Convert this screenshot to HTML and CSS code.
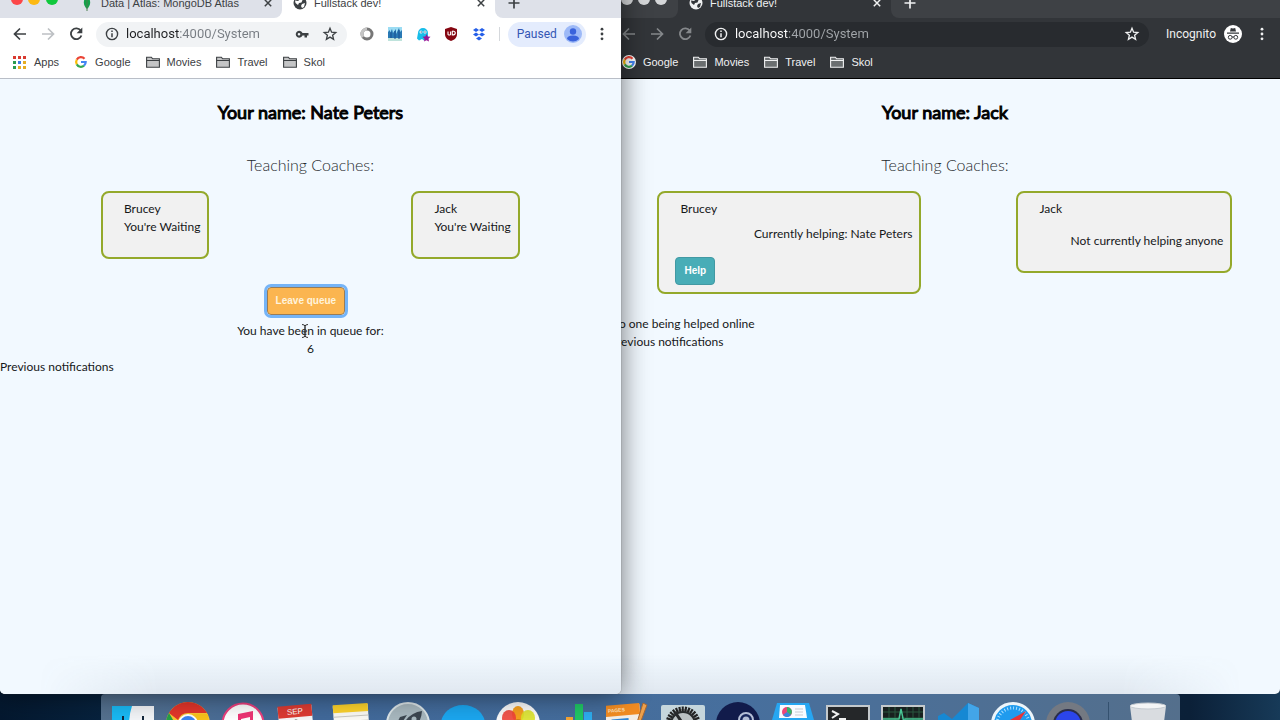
FILE: index.html
```html
<!DOCTYPE html>
<html lang="en">
<head>
<meta charset="utf-8">
<title>Fullstack dev!</title>
<link rel="stylesheet" href="styles.css">
</head>
<body>
<svg class="sprite" aria-hidden="true">
  <symbol id="back" viewBox="0 0 16 16"><path d="M14 8H3M8 2.500L2.500 8L8 13.500" fill="none" stroke="currentColor" stroke-width="1.700"/></symbol>
  <symbol id="forward" viewBox="0 0 16 16"><path d="M2 8h11M8 2.500L13.500 8L8 13.500" fill="none" stroke="currentColor" stroke-width="1.700"/></symbol>
  <symbol id="reload" viewBox="0 0 16 16"><path d="M12.700 4.600A5.400 5.400 0 1 0 13.400 9.500" fill="none" stroke="currentColor" stroke-width="1.800"/><path d="M14.300 1.500v5.700H8.600z" fill="currentColor"/></symbol>
  <symbol id="info" viewBox="0 0 16 16"><circle cx="8" cy="8" r="5.600" fill="none" stroke="currentColor" stroke-width="1.400"/><path d="M8 7.200V11.200M8 4.600v1.500" stroke="currentColor" stroke-width="1.500"/></symbol>
  <symbol id="star" viewBox="0 0 16 16"><path d="M8 2.300L9.600 6.200L13.800 6.500L10.600 9.200L11.600 13.300L8 11.100L4.400 13.300L5.400 9.200L2.200 6.500L6.400 6.200Z" fill="none" stroke="currentColor" stroke-width="1.300"/></symbol>
  <symbol id="dots" viewBox="0 0 16 16"><circle cx="8" cy="3.200" r="1.400"/><circle cx="8" cy="8" r="1.400"/><circle cx="8" cy="12.800" r="1.400"/></symbol>
  <symbol id="close" viewBox="0 0 16 16"><path d="M4.800 4.800l6.400 6.400M11.200 4.800l-6.400 6.400" stroke="currentColor" stroke-width="1.500"/></symbol>
  <symbol id="plus" viewBox="0 0 16 16"><path d="M8 2.500v11M2.500 8h11" stroke="currentColor" stroke-width="1.700"/></symbol>
  <symbol id="folder" viewBox="0 0 14 14"><path d="M.600 12.200V2.200h4.800l1.200 1.600h6.800v8.400z" fill="currentColor" fill-opacity=".3" stroke="currentColor" stroke-width="1.100"/><path d="M.600 5.500h12.800" stroke="currentColor"/></symbol>
  <symbol id="google" viewBox="0 0 14 14"><g fill="none" stroke-width="2.200"><path d="M2.800 4.600A4.700 4.700 0 0 1 10.500 3.800" stroke="#ea4335"/><path d="M2.800 4.600A4.900 4.900 0 0 0 2.800 9.400" stroke="#fbbc05"/><path d="M2.800 9.400A4.700 4.700 0 0 0 10 10.600" stroke="#34a853"/><path d="M10 10.600A4.700 4.700 0 0 0 11.700 7H7" stroke="#4285f4"/></g></symbol>
  <symbol id="globe" viewBox="0 0 16 16"><circle cx="8" cy="8" r="6.500" fill="currentColor"/><path class="land" d="M3 5.500l3 .5 2-1.500 2.500.5-1 2.500-2.500.5L6 10 3.500 8zM10 9l3-1-1 4-2 1-1-2z"/></symbol>
</svg>

<div class="desktop">
  <main class="workspace">

    <section class="window window-back">
      <div class="tabs">
        <div class="tabs-start"><svg class="lights" viewBox="0 0 60 16"><g fill="#d5d7d9"><circle cx="17" cy="4" r="6"/><circle cx="34" cy="4" r="6"/><circle cx="51" cy="4" r="6"/></g></svg></div>
        <div class="tab"><svg class="icon"><use href="#globe"/></svg><span class="tab-title">Fullstack dev!</span><button class="plain" aria-label="Close tab"><svg class="icon"><use href="#close"/></svg></button></div>
        <div class="tabs-end"><button class="plain" aria-label="New tab"><svg class="icon"><use href="#plus"/></svg></button></div>
      </div>
      <div class="toolbar">
        <button class="plain muted" aria-label="Back"><svg class="icon"><use href="#back"/></svg></button>
        <button class="plain muted" aria-label="Forward"><svg class="icon"><use href="#forward"/></svg></button>
        <button class="plain muted" aria-label="Reload"><svg class="icon"><use href="#reload"/></svg></button>
        <div class="address"><svg class="icon"><use href="#info"/></svg><input class="url" type="text" aria-label="Address" value="localhost:4000/System"><button class="plain" aria-label="Bookmark page"><svg class="icon"><use href="#star"/></svg></button></div>
        <div class="incognito"><span>Incognito</span>
          <svg class="badge" viewBox="0 0 18 18"><circle cx="9" cy="9" r="9" fill="#fff"/><path d="M6 6.500l.8-3.500 2.200.5 2.200-.5.8 3.500zM3 7.500h12v1.200H3z" fill="#35383c"/><g fill="none" stroke="#35383c"><circle cx="6.200" cy="12.300" r="1.900"/><circle cx="11.800" cy="12.300" r="1.900"/><path d="M8 12h2"/></g></svg></div>
        <button class="plain" aria-label="Menu"><svg class="icon" fill="currentColor"><use href="#dots"/></svg></button>
      </div>
      <nav class="bookmarks" aria-label="Bookmarks">
        <a href="#"><svg class="mark mark-disc"><use href="#google"/></svg>Google</a>
        <a href="#"><svg class="mark"><use href="#folder"/></svg>Movies</a>
        <a href="#"><svg class="mark"><use href="#folder"/></svg>Travel</a>
        <a href="#"><svg class="mark"><use href="#folder"/></svg>Skol</a>
      </nav>
      <article class="page">
        <h1>Your name: Jack</h1>
        <h2>Teaching Coaches:</h2>
        <div class="coaches">
          <div class="coach coach-helping">
            <p class="coach-name">Brucey</p>
            <p class="coach-status">Currently helping: Nate Peters</p>
            <button class="btn btn-help">Help</button>
          </div>
          <div class="coach coach-idle">
            <p class="coach-name">Jack</p>
            <p class="coach-status">Not currently helping anyone</p>
          </div>
        </div>
        <div class="notes">
          <p>No one being helped online</p>
          <p>Previous notifications</p>
        </div>
      </article>
    </section>

    <section class="window window-front">
      <div class="tabs">
        <div class="tabs-start">
          <svg class="lights" viewBox="0 0 60 16"><circle cx="17" cy="4" r="6" fill="#fc4648"/><circle cx="34" cy="4" r="6" fill="#fdb912"/><circle cx="52" cy="4" r="6" fill="#10c83c"/></svg>
          <svg class="icon leaf" viewBox="0 0 16 16"><path d="M8 0C12 5 12.500 10 8 14C3.500 10 4 5 8 0z" fill="#13a24a"/><path d="M8 3v13" stroke="#4b7f4f"/></svg>
          <span class="tab-title">Data | Atlas: MongoDB Atlas</span>
          <button class="plain" aria-label="Close tab"><svg class="icon"><use href="#close"/></svg></button>
        </div>
        <div class="tab"><svg class="icon"><use href="#globe"/></svg><span class="tab-title">Fullstack dev!</span><button class="plain" aria-label="Close tab"><svg class="icon"><use href="#close"/></svg></button></div>
        <div class="tabs-end"><button class="plain" aria-label="New tab"><svg class="icon"><use href="#plus"/></svg></button></div>
      </div>
      <div class="toolbar">
        <button class="plain" aria-label="Back"><svg class="icon"><use href="#back"/></svg></button>
        <button class="plain muted" aria-label="Forward"><svg class="icon"><use href="#forward"/></svg></button>
        <button class="plain" aria-label="Reload"><svg class="icon"><use href="#reload"/></svg></button>
        <div class="address"><svg class="icon"><use href="#info"/></svg><input class="url" type="text" aria-label="Address" value="localhost:4000/System">
          <button class="plain" aria-label="Passwords"><svg class="icon" viewBox="0 0 16 16"><path fill-rule="evenodd" d="M8.500 7H14.500v2.500H13v2h-2.500v-2h-2A3.500 3.500 0 1 1 8.500 7zM5 6.900a1.300 1.300 0 1 0 0 2.600a1.300 1.300 0 1 0 0-2.600z" fill="currentColor"/></svg></button>
          <button class="plain" aria-label="Bookmark page"><svg class="icon"><use href="#star"/></svg></button></div>
        <svg class="icon" viewBox="0 0 16 16"><circle cx="8" cy="8" r="5" fill="none" stroke="#777" stroke-width="3"/><path d="M8 3a5 5 0 0 0-4 8" fill="none" stroke="#c4c4c4" stroke-width="3"/></svg>
        <svg class="icon" viewBox="0 0 16 16"><path fill="#9bdcf3" d="M1 1h14v14H1z"/><path fill="#2878b4" d="M1 6l2-2v3l2-4 1 4 3-4v5l3-6 1 4 2-2v8H1z"/><path fill="#bfe3dc" d="M1 12h14v3H1z"/><path stroke="#164f91" d="M4 6v6M8 5v8M12 4v9"/></svg>
        <svg class="icon" viewBox="0 0 16 16"><path fill="#18bde9" d="M3 7a5 5 0 0 1 10 0v7l-2-1-2 1.500-2-1.500-3 1.500-2-2z"/><circle cx="6" cy="6" r="1.500" fill="#fff"/><circle cx="10" cy="6" r="1.500" fill="#fff"/><circle cx="6.200" cy="6" r=".700" fill="#185c83"/><circle cx="10" cy="6" r=".700" fill="#185c83"/><path d="M11.500 8l1.200 2.500 2.800.3-2 2 .5 2.700-2.500-1.300L9 15.500l.5-2.700-2-2 2.800-.3z" fill="#9b1695"/></svg>
        <svg class="icon" viewBox="0 0 16 16"><path fill="#850611" d="M8 1l6 2v5c0 4-3 6-6 7-3-1-6-3-6-7V3z"/><path d="M5 5.500v2.800q1.300 1.500 2.600 0V5.500M9.300 5v4q3 0 3-2t-3-2" fill="none" stroke="#fff" stroke-width="1.100"/></svg>
        <svg class="icon" viewBox="0 0 16 16"><path fill="#245ee8" d="M5 2l3 2-3 2-3-2zM11 2l3 2-3 2-3-2zM5 6.500l3 2-3 2-3-2zM11 6.500l3 2-3 2-3-2zM8 10.500l3 2-3 2-3-2z"/></svg>
        <span class="rule"></span>
        <button class="paused">Paused<svg class="badge" viewBox="0 0 18 18"><circle cx="9" cy="9" r="9" fill="#9db9f7"/><circle cx="9" cy="6.500" r="3.200" fill="#3a63dc"/><path d="M3 14q0-3.500 6-3.500t6 3.500q-6 5-12 0z" fill="#3a63dc"/></svg></button>
        <button class="plain" aria-label="Menu"><svg class="icon" fill="currentColor"><use href="#dots"/></svg></button>
      </div>
      <nav class="bookmarks" aria-label="Bookmarks">
        <a href="#"><svg class="mark" viewBox="0 0 14 14"><path d="M0 2.500h14" stroke="#d93a30" stroke-width="3" stroke-dasharray="3 2"/><path d="M0 7.500h3" stroke="#2b9b50" stroke-width="3"/><path d="M5 7.500h3" stroke="#3f7be2" stroke-width="3"/><path d="M10 7.500h3" stroke="#e6ad21" stroke-width="3"/><path d="M0 12.500h3" stroke="#2b9b50" stroke-width="3"/><path d="M5 12.500h8" stroke="#e6ad21" stroke-width="3" stroke-dasharray="3 2"/></svg>Apps</a>
        <a href="#"><svg class="mark"><use href="#google"/></svg>Google</a>
        <a href="#"><svg class="mark"><use href="#folder"/></svg>Movies</a>
        <a href="#"><svg class="mark"><use href="#folder"/></svg>Travel</a>
        <a href="#"><svg class="mark"><use href="#folder"/></svg>Skol</a>
      </nav>
      <article class="page">
        <h1>Your name: Nate Peters</h1>
        <h2>Teaching Coaches:</h2>
        <div class="coaches">
          <div class="coach coach-waiting"><p class="coach-name">Brucey</p><p>You're Waiting</p></div>
          <div class="coach coach-waiting"><p class="coach-name">Jack</p><p>You're Waiting</p></div>
        </div>
        <div class="queue">
          <button class="btn btn-leave">Leave queue</button>
          <p class="queue-label">You have been in queue for:
            <svg class="caret" viewBox="0 0 8 16"><path d="M1 1.500q3 0 3 2v9q0 2-3 2M7 1.500q-3 0-3 2v9q0 2 3 2M2.500 9h3" fill="none" stroke="#333"/></svg></p>
          <p>6</p>
        </div>
        <p>Previous notifications</p>
      </article>
    </section>
  </main>

  <footer class="shelf">
    <div class="dock">
      <svg class="app" viewBox="0 0 44 44"><path fill="#f3f5f8" d="M1 4h42v40H1z"/><path fill="#19b9f4" d="M1 4h20q-3 9-3 20h5v20H1z"/><path d="M12 14v6M32 14v6" stroke="#14273c" stroke-width="2"/></svg>
      <svg class="app" viewBox="0 0 44 44"><circle cx="22" cy="22" r="22" fill="#f9c730"/><path fill="#e3352b" d="M3 11A22 22 0 0 1 41 11H22A11 11 0 0 0 12 18z"/><path fill="#24a148" d="M3 11l10 17 5 16A22 22 0 0 1 3 11z"/><path fill="#f9c21a" d="M22 12h20v20H28z"/><circle cx="22" cy="22" r="10" fill="#fff"/><circle cx="22" cy="22" r="8" fill="#3c83ef"/></svg>
      <svg class="app" viewBox="0 0 44 44"><circle cx="22" cy="22" r="20.500" fill="#fff" stroke="#ec3f7d" stroke-width="2"/><path fill="#ee3474" d="M17 12l15-3v20h-3V15l-9 2v15h-3z"/></svg>
      <svg class="app" viewBox="0 0 44 44"><g transform="rotate(-5 22 22)"><path fill="#f7f7f7" d="M3 4h34v40H3z"/><path fill="#dd3b32" d="M3 3h34v12H3z"/><text class="sep" x="20" y="12" text-anchor="middle">SEP</text><path d="M22 19q-4-2-5 3" stroke="#333" stroke-width="2" fill="none"/></g></svg>
      <svg class="app" viewBox="0 0 44 44"><g transform="rotate(-4 22 22)"><path fill="#fbfaf5" d="M3 3h35v41H3z"/><path fill="#fdd32b" d="M3 2h35v8H3z"/><path stroke="#c9c8c1" d="M3 14h35M3 19h35"/></g></svg>
      <svg class="app" viewBox="0 0 44 44"><circle cx="22" cy="22" r="21" fill="#a8b8bf" stroke="#dce5e8" stroke-width="2"/><path fill="#3c4650" d="M36 9q-14 2-20 16l5 5Q35 24 36 9zM17 19l-6 2 3-6 7-2z"/><circle cx="28" cy="17" r="2.500" fill="#a8b8bf"/></svg>
      <svg class="app" viewBox="0 0 44 44"><ellipse cx="22" cy="22" rx="22" ry="19" fill="#1ba6ef"/></svg>
      <svg class="app" viewBox="0 0 44 44"><circle cx="22" cy="22" r="22" fill="#fafafa"/><ellipse cx="22" cy="12" rx="6" ry="8" fill="#f7a01e"/><ellipse cx="13" cy="16" rx="7" ry="8" fill="#ef4338" opacity=".9"/><ellipse cx="32" cy="16" rx="7" ry="8" fill="#dbe328" opacity=".9"/><circle cx="22" cy="22" r="5" fill="#d2801c"/></svg>
      <svg class="app" viewBox="0 0 44 44"><path fill="#f4a334" d="M15 15h7v29h-7z"/><path fill="#20c765" d="M24 2h8v42h-8z"/><path fill="#2dacee" d="M33 10h8v34h-8z"/></svg>
      <svg class="app" viewBox="0 0 44 44"><g transform="rotate(-5 22 22)"><path fill="#f4eee6" d="M0 3h35v41H0z"/><path fill="#f28c22" d="M0 2h35v11H0z"/><text class="pages" x="3" y="9">PAGES</text><path fill="#2f87d8" d="M6 16h17v20H6z"/><path fill="#f2c34d" d="M11 19h8v10h-8z"/></g><path fill="#eea14c" stroke="#a86730" d="M37 1l4 2-12 32-3 2z"/></svg>
      <svg class="app" viewBox="0 0 44 44"><rect x="0" y="3" width="44" height="44" rx="2" fill="#c5d6dc"/><circle cx="22" cy="22" r="15" fill="#777d80" stroke="#222" stroke-width="5" stroke-dasharray="2 1"/><circle cx="22" cy="22" r="12" fill="#bac1c3" stroke="#272b2d" stroke-width="2"/><path d="M22 22l-8-12M22 22h13" stroke="#27292b" stroke-width="3"/></svg>
      <svg class="app" viewBox="0 0 44 44"><circle cx="22" cy="22" r="22" fill="#111b4b"/><circle cx="30" cy="18" r="7" fill="#18265b" stroke="#b5bed6" stroke-width="2"/><circle cx="30" cy="18" r="3.500" fill="#b5bed6"/></svg>
      <svg class="app" viewBox="0 0 44 44"><path fill="#26a6f2" d="M6 1h32l5 17v26H1V18z"/><path fill="#f8fbff" d="M9 3h25l2 13H8z"/><circle cx="16" cy="10" r="5" fill="#ee4578"/><path fill="#35b56b" d="M16 10V5a5 5 0 0 1 4 8z"/><path fill="#3a86db" d="M16 10l4 3a5 5 0 0 1-8 0z"/><path stroke="#c8cbd1" d="M24 7h8M24 10h8M24 13h8"/></svg>
      <svg class="app" viewBox="0 0 44 44"><rect x="1" y="4" width="42" height="44" fill="#252729" stroke="#c4c9cc" stroke-width="2"/><path d="M6 9l6 3-6 4M13 17h7" fill="none" stroke="#f1f1f1" stroke-width="2"/></svg>
      <svg class="app" viewBox="0 0 44 44"><rect x="1" y="4" width="42" height="44" fill="#18201f" stroke="#c4c9cc" stroke-width="2"/><path stroke="#28563f" d="M2 10h40M2 16h40M8 5v39M14 5v39M26 5v39M32 5v39M38 5v39"/><path fill="none" stroke="#48c594" stroke-width="1.500" d="M2 17h16l2-10 3 14 1-4h18"/></svg>
      <svg class="app" viewBox="0 0 44 44"><path fill="#1688d3" d="M32 1l11 5v38H2V14l6-3 8 6z"/><path fill="#43a5e8" d="M32 1l11 5v38H32z"/></svg>
      <svg class="app" viewBox="0 0 44 44"><circle cx="22" cy="22" r="20.500" fill="#1f9bee" stroke="#edf5fa" stroke-width="3"/><circle cx="22" cy="22" r="16" fill="none" stroke="#a6ddff" stroke-width="3" stroke-dasharray="1 2"/><path fill="#e53538" d="M35 9L25 24l-6-6z"/><path fill="#fff" d="M19 18l6 6L9 35z"/></svg>
      <svg class="app" viewBox="0 0 44 44"><circle cx="22" cy="22" r="22" fill="#747982"/><circle cx="22" cy="22" r="15" fill="#292d4b"/><circle cx="22" cy="22" r="13" fill="#2b45eb"/></svg>
      <span class="dock-rule"></span>
      <svg class="app" viewBox="0 0 44 44"><path fill="#d9dce0" d="M4 4h36l-5 40H9z"/><ellipse cx="22" cy="4" rx="18" ry="3" fill="#f4f5f6" stroke="#c5cbd1"/></svg>
    </div>
  </footer>
</div>
</body>
</html>
```

FILE: styles.css
```css
* { box-sizing: border-box; }
body { margin: 0; }
h1, h2, p { margin: 0; font-weight: normal; }
svg { display: block; flex: none; }
button, input { font: inherit; color: inherit; }
.sprite { position: absolute; width: 0; height: 0; }

.desktop {
  display: flex;
  flex-direction: column;
  height: 100vh;
  overflow: hidden;
  background: linear-gradient(90deg, #04182f, #0b3153 20%, #0b2038 93%, #173a58);
  font: 12px/16px Roboto, "Liberation Sans", sans-serif;
}
.workspace { position: relative; flex: 1; }
.workspace::after {
  content: "";
  position: absolute;
  inset: auto 3% 0 3%;
  height: 40px;
  background: linear-gradient(transparent, rgba(80, 95, 115, .11));
  mask-image: linear-gradient(90deg, transparent, #000 10%, #000 90%, transparent);
  pointer-events: none;
}

/* Browser windows, pushed partly above the top edge of the screen */
.window {
  position: absolute;
  top: -20px;
  bottom: 0;
  display: flex;
  flex-direction: column;
  overflow: hidden;
  border-radius: 0 0 5px 5px;
  background: var(--bar);
  color: var(--ink);
}
.window-front {
  left: 0;
  width: 48.5%;
  box-shadow: 0 0 28px rgba(0, 0, 0, .55), 0 0 1px #555;
  --bar: #fff;
  --strip: #dee1e9;
  --ink: #3c4043;
  --field: #f1f3f5;
  --dim: #bdc0c4;
  --host: #202124;
  --path: #777c82;
  --line: #b9bec7;
}
.window-back {
  left: 47.65%;
  right: 0;
  --bar: #323539;
  --strip: #3e4145;
  --ink: #f0f1f2;
  --field: #282b2f;
  --dim: #85888b;
  --host: #fff;
  --path: #a2a6aa;
  --line: #000;
}

.tabs { display: flex; height: 38px; font: 11px/16px "Liberation Sans", sans-serif; }
.tabs > div { display: flex; align-items: center; padding-top: 8px; }
.tabs-start { background: var(--strip); border-radius: 0 0 8px 0; }
.window-front .tabs-start { width: 282px; padding-right: 6px; }
.window-back .tabs-start { width: 68px; }
.lights { width: 60px; height: 16px; }
.leaf { margin: 0 6px 0 19px; }
.tab { width: 213px; padding-left: 10px; padding-right: 6px; gap: 6px; }
.tab-title { flex: 1; white-space: nowrap; }
.tabs-end { flex: 1; padding-left: 11px; background: var(--strip); border-radius: 0 0 0 8px; }
.land { fill: var(--bar); }

.icon { width: 16px; height: 16px; }
.plain { padding: 0; border: 0; background: none; }
.muted { color: var(--dim); }
.toolbar { display: flex; align-items: center; gap: 12px; height: 32px; padding: 0 11px 0 12px; }
.window-back .toolbar { padding-left: 11px; padding-right: 10px; }
.address {
  display: flex;
  flex: 1;
  align-items: center;
  gap: 6px;
  min-width: 0;
  height: 25px;
  padding: 0 9px 0 8px;
  border-radius: 13px;
  background: var(--field);
}
.address .plain + .plain { margin-left: 6px; }
.url {
  flex: 1;
  min-width: 0;
  padding: 0;
  border: 0;
  outline: 0;
  font-size: 13px;
  line-height: 20px;
  color: transparent;
  background: linear-gradient(90deg, var(--host) 54px, var(--path) 54px);
  background-clip: text;
}
.rule { width: 1px; height: 14px; background: #d5d8dc; }
.badge { width: 18px; height: 18px; }
.paused {
  display: flex;
  align-items: center;
  justify-content: space-between;
  width: 78px;
  height: 25px;
  margin: 0 -4px;
  padding: 0 4px 0 9px;
  border: 0;
  border-radius: 13px;
  background: #e4ecfd;
  color: #3456b4;
}
.incognito { display: flex; align-items: center; gap: 8px; margin-left: 5px; }
.bookmarks {
  display: flex;
  gap: 15px;
  height: 29px;
  padding: 4px 13px;
  border-bottom: 1px solid var(--line);
  font: 11px/16px "Liberation Sans", sans-serif;
}
.window-back .bookmarks { padding-left: 12px; }
.bookmarks a { display: flex; align-items: center; gap: 7px; height: 16px; color: inherit; text-decoration: none; }
.mark { width: 14px; height: 14px; }
.mark-disc { border-radius: 50%; background: #fff; }

/* Queue page shown in both windows */
.page {
  flex: 1;
  padding-top: 20px;
  background: #f2f9ff;
  color: #161819;
  font: 12px/18px Lato, "Liberation Sans", sans-serif;
}
.page h1 { font-size: 18px; line-height: 26px; text-align: center; color: #000; -webkit-text-stroke: 1px #000; }
.page h2 { margin-top: 28px; font-size: 16px; font-weight: 300; line-height: 24px; text-align: center; color: #25292d; }
.coaches { display: flex; justify-content: space-around; align-items: flex-start; margin-top: 14px; }
.coach {
  padding: 7px 7px 21px 21px;
  border: 2px solid #94a92b;
  border-radius: 8px;
  background: #f1f1f1;
  white-space: nowrap;
}
.coach-waiting { min-width: 107px; }
.coach-helping { min-width: 264px; padding-left: 16px; padding-bottom: 7px; }
.coach-helping .coach-name { margin-left: 5px; }
.coach-helping .coach-status { margin: 7px 0 14px; text-align: right; }
.coach-idle { min-width: 216px; }
.coach-idle .coach-status { margin-top: 14px; text-align: right; }
.btn {
  height: 28px;
  padding: 0 8px;
  border: 1px solid #4299a3;
  border-radius: 4px;
  background: #48adb7;
  color: #fff;
  font: bold 10px/16px "Liberation Sans", sans-serif;
}
.btn-help { display: block; }
.btn-leave {
  margin: 0 9px 7px 0;
  vertical-align: top;
  border-color: #977c58;
  background: #fbb550;
  color: #fff3dc;
  outline: 3px solid #75b4f7;
}
.queue { margin-top: 28px; text-align: center; }
.queue-label { position: relative; }
.caret { position: absolute; top: 1px; left: 50%; width: 8px; height: 16px; margin-left: -9px; }
.notes { margin-top: 21px; }

.shelf { display: flex; justify-content: center; height: 26px; overflow: hidden; }
.dock {
  display: flex;
  gap: 11px;
  height: 56px;
  padding: 8px 10px;
  border-radius: 4px;
  background: linear-gradient(90deg, #55718f, #41699a 20%, #476f9d 60%, #546f8c);
}
.app { width: 44px; height: 44px; }
.dock-rule { width: 1px; height: 40px; margin: 0 6px 0 7px; background: #34516f; }
.sep { font: 8px "Liberation Sans", sans-serif; fill: #fff; }
.pages { font: bold 5px "Liberation Sans", sans-serif; fill: #ffe2bb; }
```
